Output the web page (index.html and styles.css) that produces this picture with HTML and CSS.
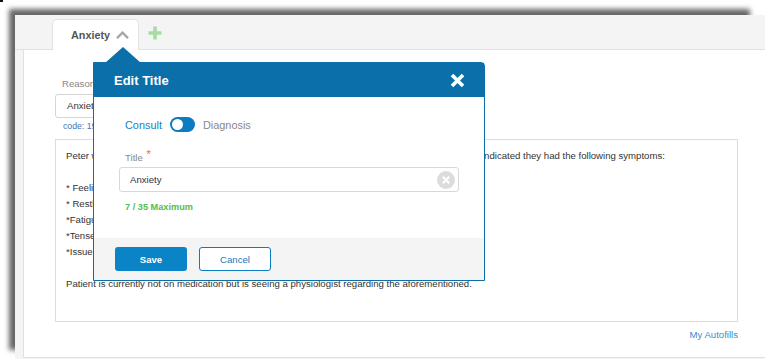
FILE: index.html
```html
<!DOCTYPE html>
<html lang="en">
<head>
  <meta charset="UTF-8">
  <meta name="viewport" content="width=device-width, initial-scale=1.0">
  <title>Edit Title</title>
  <link rel="stylesheet" href="styles.css">
</head>
<body>
  <span class="corner-mark"></span>

  <div class="frame">
    <div class="window">
      <!-- onglets -->
      <div class="tabs">
        <div class="tab">
          <span class="tab-name">Anxiety</span>
          <svg class="chevron" width="13" height="8" viewBox="0 0 13 8"><path d="M1 7.2 L6.5 1.6 L12 7.2" fill="none" stroke="#a8a8a8" stroke-width="2.4"/></svg>
        </div>
        <svg class="add-tab" width="14" height="14" viewBox="0 0 14 14"><path d="M7 0.5 V13.5 M0.5 7 H13.5" stroke="#a9dca3" stroke-width="3.6"/></svg>
      </div>

      <div class="content">
        <label class="field-label">Reason for visit</label>
        <div class="reason-input">Anxiety</div>
        <div class="code">code: 197480006</div>

        <div class="notes">Peter was seen today for a follow up consultation and during the discussion with his physician, he indicated they had the following symptoms:

* Feeling nervous, restless or tense
* Restlessness and irritability
*Fatigue during the day
*Tense muscles
*Issues with sleeping

Patient is currently not on medication but is seeing a physiologist regarding the aforementioned.</div>

        <div class="autofills"><a href="#">My Autofills</a></div>
      </div>
    </div>
  </div>

  <!-- popup de modification du titre -->
  <div class="modal">
    <div class="modal-header">
      <h2>Edit Title</h2>
      <button class="close" type="button">
        <svg width="15" height="15" viewBox="0 0 15 15"><path d="M2 2 L13 13 M13 2 L2 13" stroke="#fff" stroke-width="3.6"/></svg>
      </button>
    </div>
    <div class="modal-body">
      <div class="kind-switch">
        <span class="kind active">Consult</span>
        <span class="switch"><span class="knob"></span></span>
        <span class="kind">Diagnosis</span>
      </div>
      <label class="title-label">Title <span class="req">*</span></label>
      <div class="title-input">
        <span>Anxiety</span>
        <svg class="clear" width="18" height="18" viewBox="0 0 18 18"><circle cx="9" cy="9" r="9" fill="#dcdcdc"/><path d="M5.8 5.8 L12.2 12.2 M12.2 5.8 L5.8 12.2" stroke="#fff" stroke-width="2.2"/></svg>
      </div>
      <div class="counter">7 / 35 Maximum</div>
    </div>
    <div class="modal-footer">
      <button class="btn btn-save" type="button">Save</button>
      <button class="btn btn-cancel" type="button">Cancel</button>
    </div>
  </div>
</body>
</html>
```

FILE: styles.css
```css
body {
  margin: 0;
  width: 765px;
  height: 359px;
  overflow: hidden;
  background-color: #fff;
  font-family: 'Liberation Sans', Arial, sans-serif;
  color: #333;
}

.corner-mark {
  position: absolute;
  top: 0;
  left: 0;
  width: 3px;
  height: 2px;
  background-color: #111;
}

.frame {
  margin: 15px 0 0 15px;
  width: 741px;
  height: 341px;
  box-shadow: -6px -6px 5px rgba(0, 0, 0, 0.6);
}

.window {
  width: 770px;
  height: 360px;
  background-color: #f4f4f4;
}

.tabs {
  height: 34px;
  display: flex;
  align-items: flex-end;
  padding-left: 37px;
  border-bottom: 1px solid #e0e0e0;
}
.tab {
  height: 31px;
  margin-bottom: -1px;
  box-sizing: border-box;
  display: flex;
  align-items: center;
  padding: 0 9px 0 18px;
  background-color: #fff;
  border: 1px solid #e2e2e2;
  border-bottom: none;
  border-radius: 5px 5px 0 0;
}
.tab-name {
  font-size: 10.8px;
  font-weight: bold;
  color: #555;
  margin-right: 6px;
}
.chevron {
  margin-top: -1px;
}
.add-tab {
  margin: 0 0 9px 9px;
}

.content {
  margin-left: 8px;
  height: 308px;
  box-sizing: border-box;
  background-color: #fff;
  border-left: 1px solid #e0e0e0;
  border-bottom: 1px solid #e0e0e0;
  padding: 28px 0 0 31px;
}
.field-label {
  display: block;
  margin-left: 7px;
  font-size: 9.6px;
  line-height: 12px;
  color: #888;
}
.reason-input {
  margin-top: 4px;
  width: 300px;
  height: 24px;
  box-sizing: border-box;
  border: 1px solid #d5d5d5;
  border-radius: 3px;
  padding-left: 11px;
  font-size: 9.6px;
  line-height: 22px;
  color: #333;
}
.code {
  margin: 2px 0 0 8px;
  font-size: 8.7px;
  line-height: 12px;
  color: #3a78b8;
}
.notes {
  margin-top: 7px;
  width: 683px;
  height: 183px;
  box-sizing: border-box;
  border: 1px solid #dcdcdc;
  padding: 8px 10px;
  white-space: pre-line;
  font-size: 9.6px;
  line-height: 16px;
  color: #333;
}
.autofills {
  width: 683px;
  margin-top: 7px;
  text-align: right;
  font-size: 9.6px;
  line-height: 12px;
}
.autofills a {
  color: #3d8ad0;
  text-decoration: none;
}

/* popup */
.modal {
  position: absolute;
  left: 93px;
  top: 62px;
  width: 392px;
  box-sizing: border-box;
  border: 1px solid #0b6fa9;
  border-radius: 0 4px 0 0;
  background-color: #fff;
}
.modal::before {
  content: '';
  position: absolute;
  top: -16px;
  left: 11px;
  border-left: 18px solid transparent;
  border-right: 18px solid transparent;
  border-bottom: 16px solid #0b6fa9;
}
.modal-header {
  height: 34px;
  display: flex;
  align-items: center;
  justify-content: space-between;
  padding: 0 19px 0 20px;
  background-color: #0b6fa9;
}
.modal-header h2 {
  margin: 0;
  font-size: 13px;
  font-weight: bold;
  color: #fff;
}
.close {
  border: none;
  background: none;
  padding: 0;
  display: flex;
  cursor: pointer;
}

.modal-body {
  height: 141px;
  box-sizing: border-box;
  padding: 20px 25px 0 25px;
}
.kind-switch {
  display: flex;
  align-items: center;
  gap: 8px;
  height: 15px;
  padding-left: 6px;
}
.kind {
  font-size: 10.9px;
  color: #888;
}
.kind.active {
  color: #1a80c2;
}
.switch {
  width: 25px;
  height: 15px;
  box-sizing: border-box;
  border-radius: 8px;
  background-color: #0a7cc1;
  padding: 2px;
}
.knob {
  display: block;
  width: 11px;
  height: 11px;
  border-radius: 50%;
  background-color: #fff;
}
.title-label {
  display: block;
  margin: 16px 0 0 6px;
  font-size: 9.6px;
  line-height: 12px;
  color: #888;
}
.req {
  color: #e8663d;
  font-size: 11px;
  vertical-align: 3px;
  margin-left: 1px;
}
.title-input {
  margin-top: 3px;
  height: 25px;
  box-sizing: border-box;
  display: flex;
  align-items: center;
  justify-content: space-between;
  border: 1px solid #d8d8d8;
  border-radius: 3px;
  padding: 0 3px 0 10px;
  font-size: 9.6px;
  color: #333;
}
.counter {
  margin: 9px 0 0 6px;
  font-size: 9.2px;
  font-weight: bold;
  line-height: 12px;
  color: #56bd4c;
}

.modal-footer {
  height: 42px;
  box-sizing: border-box;
  display: flex;
  gap: 12px;
  padding: 9px 21px;
  background-color: #f4f4f4;
}
.btn {
  width: 72px;
  height: 24px;
  border-radius: 3px;
  font-family: 'Liberation Sans', Arial, sans-serif;
  font-size: 9.6px;
  cursor: pointer;
}
.btn-save {
  border: none;
  background-color: #0a84c6;
  color: #fff;
  font-weight: bold;
}
.btn-cancel {
  border: 1px solid #0a7cc1;
  background-color: #fff;
  color: #1a78b8;
}
```
